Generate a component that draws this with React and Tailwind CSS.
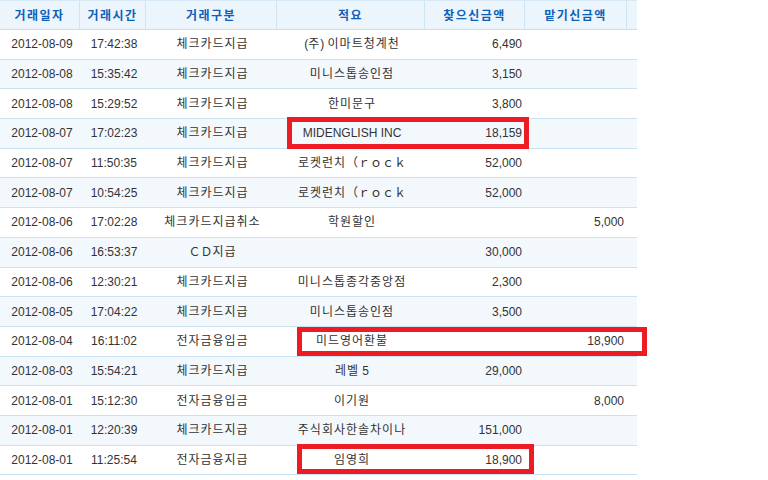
import React from "react";

const rows = [
  ["2012-08-09", "17:42:38", "체크카드지급", "(주) 이마트청계천", "6,490", ""],
  ["2012-08-08", "15:35:42", "체크카드지급", "미니스톱송인점", "3,150", ""],
  ["2012-08-08", "15:29:52", "체크카드지급", "한미문구", "3,800", ""],
  ["2012-08-07", "17:02:23", "체크카드지급", "MIDENGLISH INC", "18,159", ""],
  ["2012-08-07", "11:50:35", "체크카드지급", "로켓런치（ｒｏｃｋ", "52,000", ""],
  ["2012-08-07", "10:54:25", "체크카드지급", "로켓런치（ｒｏｃｋ", "52,000", ""],
  ["2012-08-06", "17:02:28", "체크카드지급취소", "학원할인", "", "5,000"],
  ["2012-08-06", "16:53:37", "ＣＤ지급", "", "30,000", ""],
  ["2012-08-06", "12:30:21", "체크카드지급", "미니스톱종각중앙점", "2,300", ""],
  ["2012-08-05", "17:04:22", "체크카드지급", "미니스톱송인점", "3,500", ""],
  ["2012-08-04", "16:11:02", "전자금융입금", "미드영어환불", "", "18,900"],
  ["2012-08-03", "15:54:21", "체크카드지급", "레벨 5", "29,000", ""],
  ["2012-08-01", "15:12:30", "전자금융입금", "이기원", "", "8,000"],
  ["2012-08-01", "12:20:39", "체크카드지급", "주식회사한솔차이나", "151,000", ""],
  ["2012-08-01", "11:25:54", "전자금융지급", "임영희", "18,900", ""],
];

const headers = ["거래일자", "거래시간", "거래구분", "적요", "찾으신금액", "맡기신금액"];

function K({ text }) {
  const parts = text.split(/([가-힣]+)/);
  return (
    <span>
      {parts.map((p, i) =>
        /[가-힣]/.test(p) ? (
          <span key={i} className="tracking-[1px]">{p}</span>
        ) : (
          <span key={i}>{p}</span>
        )
      )}
    </span>
  );
}

export default function App() {
  return (
    <div
      className="relative w-[768px] h-[480px] overflow-hidden bg-white text-[12px] text-[#333]"
      style={{ fontFamily: '"Liberation Sans", "Noto Sans CJK KR", sans-serif' }}
    >
      <div className="w-[637px]">
        <div className="grid grid-cols-[80px_66px_131px_148px_100px_102px_10px] h-[30px] bg-[#edf5fc] border-t border-t-[#d6e8f5] border-b border-b-[#c6dff0]">
          {headers.map((h, i) => (
            <div
              key={i}
              className="flex items-center justify-center border-r border-r-[#cfe4f3] font-bold text-[#0d60b9] tracking-[1.5px]"
              style={{ fontFamily: '"Noto Sans CJK KR", sans-serif' }}
            >
              {h}
            </div>
          ))}
          <div />
        </div>
        {rows.map((r, i) => (
          <div
            key={i}
            className={
              "grid grid-cols-[80px_66px_131px_148px_100px_102px_10px] h-[29.7px] border-b border-b-[#c8e2f2] " +
              (i % 2 === 1 ? "bg-[#f3f8fd]" : "bg-white")
            }
          >
            <div className="flex items-center justify-center pl-[4px]">{r[0]}</div>
            <div className="flex items-center justify-center pl-[2px]">{r[1]}</div>
            <div className="flex items-center justify-center pl-[2px]"><K text={r[2]} /></div>
            <div className="flex items-center justify-center pl-[2px]"><K text={r[3]} /></div>
            <div className="flex items-center justify-end pr-[3px]">{r[4]}</div>
            <div className="flex items-center justify-end pr-[3px]">{r[5]}</div>
            <div />
          </div>
        ))}
      </div>
      <div className="absolute left-[287px] top-[117px] w-[242px] h-[32px] border-[5px] border-[#ed1c24]" />
      <div className="absolute left-[297px] top-[327px] w-[350px] h-[29px] border-[5px] border-[#ed1c24]" />
      <div className="absolute left-[297px] top-[444px] w-[237px] h-[30px] border-[5px] border-[#ed1c24]" />
    </div>
  );
}
